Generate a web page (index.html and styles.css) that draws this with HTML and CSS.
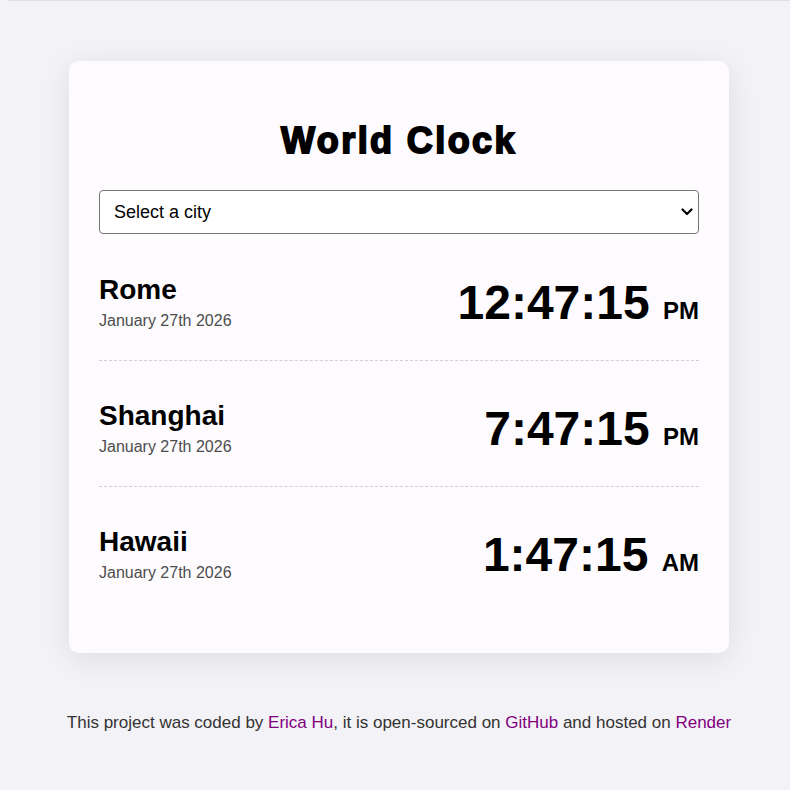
FILE: index.html
```html
<!DOCTYPE html>
<html lang="en">
<head>
<meta charset="utf-8">
<title>World Clock</title>
<link rel="stylesheet" href="styles.css">
</head>
<body>
<div class="container">
  <div class="card">
    <h1 class="title">World Clock</h1>
    <div class="select-wrap">
      <select class="city-select">
        <option>Select a city</option>
        <option>Rome</option>
        <option>Shanghai</option>
        <option>Hawaii</option>
      </select>
      <svg class="chevron" width="12" height="8" viewBox="0 0 12 8" aria-hidden="true">
        <path d="M1.5 1.5 L6 6 L10.5 1.5" fill="none" stroke="#000" stroke-width="2.2" stroke-linecap="round" stroke-linejoin="round"/>
      </svg>
    </div>
    <div class="cities">
      <div class="city">
        <div class="city-info">
          <div class="city-name">Rome</div>
          <div class="city-date">January 27th 2026</div>
        </div>
        <div class="city-time">12:47:15 <small class="ampm">PM</small></div>
      </div>
      <div class="city">
        <div class="city-info">
          <div class="city-name">Shanghai</div>
          <div class="city-date">January 27th 2026</div>
        </div>
        <div class="city-time">7:47:15 <small class="ampm">PM</small></div>
      </div>
      <div class="city">
        <div class="city-info">
          <div class="city-name">Hawaii</div>
          <div class="city-date">January 27th 2026</div>
        </div>
        <div class="city-time">1:47:15 <small class="ampm">AM</small></div>
      </div>
    </div>
  </div>
  <footer class="footer">
    This project was coded by <a href="#">Erica Hu</a>, it is open-sourced on <a href="#">GitHub</a> and hosted on <a href="#">Render</a>
  </footer>
</div>
</body>
</html>
```

FILE: styles.css
```css
html {
  background: #f3f2f6;
}
body {
  margin: 0 0 0 8px;
  border-top: 1px solid #dfe1e2;
  background: #f3f2f6;
  font-family: "Liberation Sans", Arial, sans-serif;
  color: #000;
  min-height: 789px;
}
.container {
  width: 660px;
  margin: 60px auto 0;
}
.card {
  background: #fdfbfe;
  border-radius: 10px;
  padding: 30px 30px 41px;
  box-shadow: 0 6px 30px rgba(0, 0, 0, 0.09);
}
.title {
  margin: 30px 0 29px;
  font-size: 36px;
  line-height: 40px;
  font-weight: 700;
  text-align: center;
  letter-spacing: 2.4px;
  -webkit-text-stroke: 1.8px #000;
}
.select-wrap {
  position: relative;
  margin: 0 0 1px;
}
.city-select {
  display: block;
  width: 100%;
  height: 44px;
  margin: 0;
  padding: 0 30px 0 14px;
  font-family: "Liberation Sans", Arial, sans-serif;
  font-size: 18px;
  color: #000;
  background: #fff;
  border: 1px solid #767676;
  border-radius: 4px;
  -webkit-appearance: none;
  appearance: none;
}
.chevron {
  position: absolute;
  right: 6px;
  top: 18px;
  pointer-events: none;
}
.city {
  display: flex;
  justify-content: space-between;
  align-items: flex-start;
  padding: 37px 0 30px;
  border-bottom: 1px dashed #cfcfcf;
}
.city:last-child {
  border-bottom: none;
}
.city-info {
  padding-top: 2px;
}
.city-name {
  font-size: 28px;
  line-height: 32px;
  font-weight: 700;
}
.city-date {
  margin-top: 6px;
  font-size: 16px;
  line-height: 18px;
  color: #4d4d4d;
}
.city-time {
  margin-top: 3px;
  font-size: 48px;
  line-height: 55px;
  font-weight: 700;
}
.ampm {
  font-size: 24px;
  line-height: 1;
  font-weight: 700;
}
.footer {
  margin: 60px -20px 0;
  text-align: center;
  font-size: 17px;
  line-height: 20px;
  color: #333;
  white-space: nowrap;
}
.footer a {
  color: #800080;
  text-decoration: none;
}
```
